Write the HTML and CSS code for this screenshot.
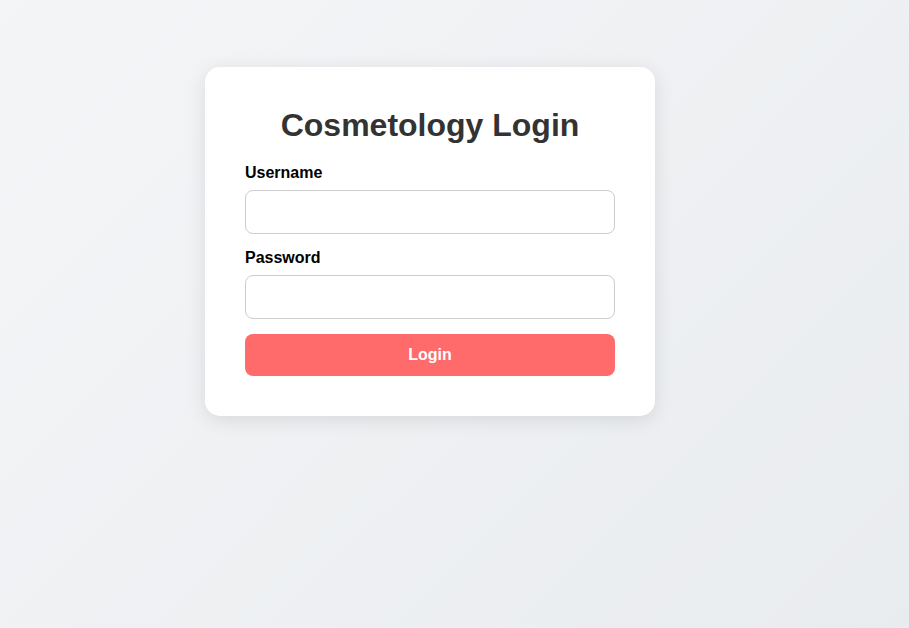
FILE: index.html
```html
<!DOCTYPE html>
<html lang="en">

<head>
  <meta charset="UTF-8">
  <meta name="viewport" content="width=device-width, initial-scale=1.0">
  <title>Cosmetology Login</title>
  <link rel="stylesheet" href="styles.css">
</head>

<body>
  <div class="login-container">
    <h2>Cosmetology Login</h2>
    <form id="loginForm">
      <div class="form-group">
        <label for="username">Username</label>
        <input type="text" id="username" name="username">
      </div>
      <div class="form-group">
        <label for="password">Password</label>
        <input type="password" id="password" name="password">
      </div>
      <button type="submit" class="login-btn">Login</button>
    </form>
  </div>
</body>

</html>
```

FILE: styles.css
```css
html, body {
  margin: 0;
  padding: 0;
  height: 100%;
}

body {
  font-family: "Liberation Sans", Arial, sans-serif;
  background: linear-gradient(135deg, #f4f5f7 0%, #e9ecef 100%);
  padding: 67px 0 0 205px;
  box-sizing: border-box;
}

.login-container {
  width: 450px;
  box-sizing: border-box;
  background: #fff;
  padding: 40px;
  border-radius: 15px;
  box-shadow: 0 4px 20px rgba(0, 0, 0, 0.1);
}

.login-container h2 {
  margin: 0 0 20px;
  text-align: center;
  font-size: 32px;
  color: #333;
}

.form-group {
  margin-bottom: 15px;
}

.form-group label {
  display: block;
  margin-bottom: 8px;
  font-weight: bold;
  font-size: 16px;
  color: #000;
}

.form-group input {
  display: block;
  width: 100%;
  box-sizing: border-box;
  padding: 12px;
  font-size: 16px;
  font-family: inherit;
  border: 1px solid #ccc;
  border-radius: 8px;
}

.login-btn {
  display: block;
  width: 100%;
  padding: 12px;
  border: none;
  border-radius: 8px;
  background: #ff6b6b;
  color: #fff;
  font-family: inherit;
  font-size: 16px;
  font-weight: bold;
  cursor: pointer;
}
```
